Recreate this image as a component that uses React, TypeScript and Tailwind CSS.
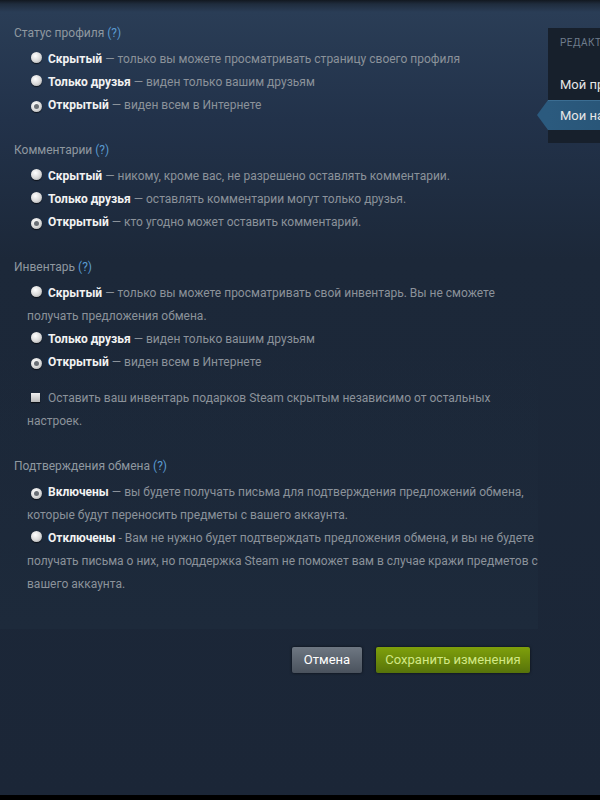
import type { ReactNode } from 'react'

type Option = {
  label: string
  text: ReactNode
  checked?: boolean
  sep?: string
}

function Radio({ checked }: { checked?: boolean }) {
  return (
    <span className="ml-[4px] mr-[6px] inline-flex h-[11px] w-[11px] items-center justify-center rounded-full bg-[radial-gradient(circle_at_40%_35%,#ffffff,#d8d8d8_55%,#9a9a9a)] shadow-[0_1px_1px_rgba(0,0,0,0.6)]">
      {checked && <span className="h-[5px] w-[5px] rounded-full bg-[#6a6f75]" />}
    </span>
  )
}

function SectionTitle({ children }: { children: ReactNode }) {
  return (
    <div className="pl-[14px] text-[12px] leading-[23px] text-[#8f98a0]">
      {children} <span className="text-[#5a9ad0]">(?)</span>
    </div>
  )
}

function OptionRow({ label, text, checked, sep = '—' }: Option) {
  return (
    <p className="pl-[27px] text-[12px] leading-[23px] text-[#8b929a]">
      <Radio checked={checked} />
      <span className="font-bold text-[#f2f2f2]">{label}</span> {sep} {text}
    </p>
  )
}

const profileOpts: Option[] = [
  { label: 'Скрытый', text: 'только вы можете просматривать страницу своего профиля' },
  { label: 'Только друзья', text: 'виден только вашим друзьям' },
  { label: 'Открытый', text: 'виден всем в Интернете', checked: true },
]

const commentOpts: Option[] = [
  { label: 'Скрытый', text: 'никому, кроме вас, не разрешено оставлять комментарии.' },
  { label: 'Только друзья', text: 'оставлять комментарии могут только друзья.' },
  { label: 'Открытый', text: 'кто угодно может оставить комментарий.', checked: true },
]

const inventoryOpts: Option[] = [
  {
    label: 'Скрытый',
    text: (
      <>
        только вы можете просматривать свой инвентарь. Вы не сможете
        <br />
        получать предложения обмена.
      </>
    ),
  },
  { label: 'Только друзья', text: 'виден только вашим друзьям' },
  { label: 'Открытый', text: 'виден всем в Интернете', checked: true },
]

const tradeOpts: Option[] = [
  {
    label: 'Включены',
    checked: true,
    text: (
      <>
        вы будете получать письма для подтверждения предложений обмена,
        <br />
        которые будут переносить предметы с вашего аккаунта.
      </>
    ),
  },
  {
    label: 'Отключены',
    sep: '-',
    text: (
      <>
        Вам не нужно будет подтверждать предложения обмена, и вы не будете
        <br />
        получать письма о них, но поддержка Steam не поможет вам в случае кражи предметов с
        <br />
        вашего аккаунта.
      </>
    ),
  },
]

function Section({ title, options, className = '' }: { title: string; options: Option[]; className?: string }) {
  return (
    <section className={className}>
      <SectionTitle>{title}</SectionTitle>
      <div className="mt-[3px]">
        {options.map((o) => (
          <OptionRow key={o.label} {...o} />
        ))}
      </div>
    </section>
  )
}

export default function App() {
  return (
    <div className="flex h-[800px] w-[600px] flex-col overflow-hidden bg-[linear-gradient(to_bottom,#121820_0px,#1f2c3d_4px,#2a3d56_12px,#22324a_120px,#1c2839_260px,#1b2637_100%)] font-['Roboto',sans-serif]">
      <div className="flex flex-1">
        {/* основная колонка с настройками */}
        <div className="w-[538px] shrink-0">
          <div className="bg-[linear-gradient(to_bottom,transparent_0%,transparent_55%,#1d2a3b_100%)] pb-[33px] pt-[22px]">
            <Section title="Статус профиля" options={profileOpts} />
            <Section title="Комментарии" options={commentOpts} className="mt-[22px]" />
            <Section title="Инвентарь" options={inventoryOpts} className="mt-[22px]" />
            <p className="mt-[13px] pl-[27px] text-[12px] leading-[23px] text-[#8b929a]">
              <span className="ml-[4px] mr-[8px] inline-block h-[9px] w-[9px] bg-[linear-gradient(to_bottom,#f0f0f0,#b8b8b8)] shadow-[0_1px_1px_rgba(0,0,0,0.6)]" />
              Оставить ваш инвентарь подарков Steam скрытым независимо от остальных
              <br />
              настроек.
            </p>
            <Section title="Подтверждения обмена" options={tradeOpts} className="mt-[22px]" />
          </div>

          <div className="mt-[18px] flex justify-end gap-[14px] pr-[8px]">
            <button
              type="button"
              className="h-[26px] w-[70px] rounded-[2px] bg-[linear-gradient(to_bottom,#6e7782,#4a525d)] text-[13px] text-white shadow-[0_0_3px_rgba(0,0,0,0.7)]"
            >
              Отмена
            </button>
            <button
              type="button"
              className="h-[26px] w-[154px] rounded-[2px] bg-[linear-gradient(to_bottom,#7fa00b,#57730a)] text-[13px] text-[#d2e885] shadow-[0_0_3px_rgba(0,0,0,0.7)]"
            >
              Сохранить изменения
            </button>
          </div>
        </div>

        {/* правое меню */}
        <div className="ml-[10px] mt-[28px] w-[200px] shrink-0 self-start bg-[#17202c] pb-[13px] pt-[8px]">
          <div className="pl-[12px] text-[10px] uppercase leading-[14px] tracking-[0.5px] text-[#6f7d8c]">
            Редактировать профиль
          </div>
          <div className="mt-[20px] h-[30px] pl-[12px] text-[13px] leading-[30px] text-[#e6e6e6]">Мой профиль</div>
          <div className="relative h-[30px] border-t border-[#3b6d92] bg-[linear-gradient(to_right,#2b5a7e,#234b6a)] pl-[12px] text-[13px] leading-[29px] text-[#e6e6e6]">
            <svg className="absolute -left-[11px] -top-[1px]" width="11" height="30" viewBox="0 0 11 30">
              <polygon points="11,0 0,15 11,30" fill="#2b5a7e" />
            </svg>
            Мои настройки приватности
          </div>
        </div>
      </div>
      <div className="h-[5px] bg-black" />
    </div>
  )
}
